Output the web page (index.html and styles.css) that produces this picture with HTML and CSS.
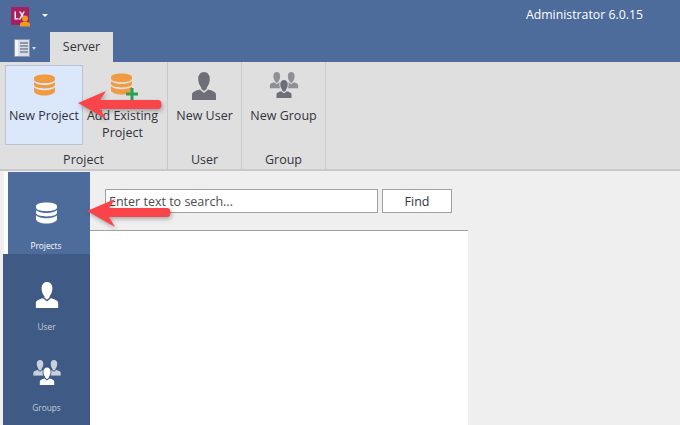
FILE: index.html
```html
<!DOCTYPE html>
<html lang="en">
<head>
<meta charset="utf-8">
<title>Administrator 6.0.15</title>
<link rel="stylesheet" href="styles.css">
</head>
<body>
<svg width="0" height="0" class="defs">
  <defs>
    <symbol id="db" viewBox="0 0 24 24">
      <path d="M0 4.200C0 1.600 5.400 0 12 0s12 1.600 12 4.200v1.600C24 8.400 18.600 10 12 10S0 8.400 0 5.800z"/>
      <path d="M0 8.600C2 11 7 12 12 12s10-1 12-3.400v3.200C24 14.400 18.600 16 12 16S0 14.400 0 11.800z"/>
      <path d="M0 14.600C2 17 7 18 12 18s10-1 12-3.400v4.200C24 21.800 18.600 24 12 24S0 21.800 0 18.800z"/>
    </symbol>
    <symbol id="person" viewBox="0 0 24 28">
      <path d="M12 0c3.400 0 5.800 2.800 5.800 6.800 0 3.400-1.300 7-3 8.600v1.400L12 19l-2.800-2.200v-1.400c-1.700-1.600-3-5.200-3-8.600C6.200 2.800 8.600 0 12 0z"/>
      <path d="M7.800 17.600 12 21l4.200-3.400c3.600 1 7.800 2.400 7.800 5V28H0v-5.400c0-2.600 4.200-4 7.800-5z"/>
    </symbol>
  </defs>
</svg>

<header class="titlebar">
  <div class="quick">
    <svg class="logo" width="20" height="20" viewBox="0 0 20 20">
      <rect x="0" y="0" width="18" height="18" fill="#a81f5f"/>
      <path d="M3.500 4.500v8h4v-1.300H5V4.500zM8 4.500l2.300 3.700-2.500 4.300h1.600l1.700-3 1.500 2 .8-1.500-1.500-1.900 2-3.600h-1.500l-1.300 2.500-1.400-2.500z" fill="#fff"/>
      <circle cx="14" cy="11.500" r="3" fill="#f29a1f"/>
      <path d="M9 19.500V17c0-1.500 2.500-2.500 5-2.500s5 1 5 2.500v2.500z" fill="#f29a1f"/>
    </svg>
    <span class="caret caret-title"></span>
    <span class="title">Administrator 6.0.15</span>
  </div>
  <div class="tabs">
    <div class="menu-button">
      <svg width="16" height="18" viewBox="0 0 16 18">
        <rect x=".5" y=".5" width="15" height="17" fill="#d8dde6" stroke="#8c99ad"/>
        <rect x="1" y="1" width="3" height="16" fill="#f4f4f4"/>
        <path d="M6 4h8M6 7h8M6 10h8M6 13h8" stroke="#4a5568" fill="none"/>
      </svg>
      <span class="caret caret-small"></span>
    </div>
    <div class="tab">Server</div>
  </div>
</header>

<section class="ribbon">
  <div class="group group-project">
    <div class="group-buttons">
      <div class="rbtn rbtn-active">
        <svg class="ico ico-orange"><use href="#db"/></svg>
        <span>New Project</span>
      </div>
      <div class="rbtn rbtn-add">
        <span class="ico-wrap">
          <svg class="ico ico-orange"><use href="#db"/></svg>
          <svg class="plus" width="12" height="12" viewBox="0 0 12 12"><path d="M4.500 0h3v4.500H12v3H7.500V12h-3V7.500H0v-3h4.500z"/></svg>
        </span>
        <span>Add Existing Project</span>
      </div>
    </div>
    <div class="group-label">Project</div>
  </div>
  <div class="group group-user">
    <div class="group-buttons">
      <div class="rbtn">
        <svg class="ico-user"><use href="#person"/></svg>
        <span>New User</span>
      </div>
    </div>
    <div class="group-label">User</div>
  </div>
  <div class="group group-group">
    <div class="group-buttons">
      <div class="rbtn">
        <svg class="ico-group" viewBox="0 0 30 28">
          <use href="#person" x="0" y="0" width="15" height="17" class="back"/>
          <use href="#person" x="15" y="0" width="15" height="17" class="back"/>
          <use href="#person" x="7" y="7" width="16" height="21" class="front"/>
        </svg>
        <span>New Group</span>
      </div>
    </div>
    <div class="group-label">Group</div>
  </div>
</section>

<main class="body">
  <nav class="sidebar">
    <div class="nav-item nav-active">
      <svg class="nav-db"><use href="#db"/></svg>
      <span>Projects</span>
    </div>
    <div class="nav-item">
      <svg class="nav-user"><use href="#person"/></svg>
      <span>User</span>
    </div>
    <div class="nav-item nav-last">
      <svg class="nav-group" viewBox="0 0 30 28">
        <use href="#person" x="0" y="0" width="15" height="17" class="back"/>
        <use href="#person" x="15" y="0" width="15" height="17" class="back"/>
        <use href="#person" x="7" y="7" width="16" height="21" class="front"/>
      </svg>
      <span>Groups</span>
    </div>
  </nav>
  <div class="content">
    <div class="search">
      <div class="search-input">Enter text to search...</div>
      <div class="find">Find</div>
    </div>
    <div class="results"></div>
  </div>
</main>

<svg class="arrow arrow-ribbon" width="86" height="30" viewBox="0 0 86 30">
  <path d="M0 13 28 1l-6 9h58c2.500 0 3.500 2 3.500 4.500S82.500 19 80 19H22l6 10z"/>
</svg>
<svg class="arrow arrow-side" width="86" height="30" viewBox="0 0 86 30">
  <path d="M0 13 28 1l-6 9h58c2.500 0 3.500 2 3.500 4.500S82.500 19 80 19H22l6 10z"/>
</svg>
</body>
</html>
```
FILE: styles.css
```css
* { box-sizing: border-box; }
html, body { margin: 0; padding: 0; }
body {
  position: relative;
  width: 680px;
  height: 425px;
  overflow: hidden;
  background: #efefef;
  font-family: "Open Sans", "Noto Sans", sans-serif;
  font-size: 12.5px;
  color: #33333d;
}
.defs { position: absolute; }

.titlebar { height: 62px; background: #4d6c9c; display: flex; flex-direction: column; }
.quick { height: 32px; display: flex; align-items: flex-start; padding: 7px 0 0 11px; }
.logo { display: block; }
.caret { width: 0; height: 0; border-style: solid; border-color: #fff transparent transparent; }
.caret-title { border-width: 3px 3px 0; margin: 7px 0 0 11px; }
.title { margin: -1px 0 0 auto; padding-right: 37px; color: #fff; font-size: 12.3px; line-height: 18px; }
.tabs { height: 30px; display: flex; }
.menu-button { width: 50px; padding: 7px 0 0 14px; display: flex; align-items: flex-start; }
.caret-small { border-width: 3px 2.5px 0; border-top-color: #d5dbe6; margin: 8px 0 0 2px; }
.tab { width: 63px; background: #dfdfdf; text-align: center; line-height: 30px; font-size: 12.5px; }

.ribbon { height: 109px; display: flex; background: #dfdfdf; border-bottom: 2px solid #c9c9c9; }
.group { display: flex; flex-direction: column; border-right: 1px solid #c9c9c9; }
.group-project { width: 168px; }
.group-user { width: 74px; }
.group-group { width: 84px; }
.group-buttons { height: 88px; flex: none; display: flex; padding: 3px 0 0 5px; }
.group-user .group-buttons, .group-group .group-buttons { padding-left: 0; }
.group-label { text-align: center; font-size: 12.5px; line-height: 17px; padding-top: 1px; }

.rbtn { display: flex; flex-direction: column; align-items: center; text-align: center; line-height: 17px; padding-top: 8px; width: 100%; height: 80px; }
.rbtn > span:last-child { margin-top: 10px; }
.rbtn-active { width: 78px; flex: none; background: #dbe8fb; border: 1px solid #b7c4d6; padding-top: 7px; }
.rbtn-add { width: 79px; flex: none; padding-top: 7px; }
.rbtn-add > span:last-child { margin-top: 11px; }
.ico { display: block; width: 21px; height: 24px; }
.ico-orange { fill: #f09a41; }
.ico-wrap { position: relative; display: block; width: 21px; height: 24px; margin-left: -3px; }
.plus { position: absolute; left: 15px; top: 16px; fill: #2f9e55; }
.ico-user { display: block; width: 24px; height: 28px; fill: #6e6e78; margin: -1px 0 0 -1px; }
.group-user .rbtn > span:last-child { margin-top: 7px; }
.ico-group { display: block; width: 30px; height: 27px; fill: #6e6e78; margin-top: -1px; }
.group-group .rbtn > span:last-child { margin-top: 8px; }
.ico-group .back { opacity: .7; }
.ico-group .front { stroke: #dfdfdf; stroke-width: 3; paint-order: stroke fill; }

.body { height: 254px; display: flex; padding: 1px 0 0 3px; }
.sidebar { width: 87px; display: flex; flex-direction: column; }
.nav-item { height: 81px; flex: none; display: flex; flex-direction: column; align-items: center; background: #3f5a85; font-size: 8.3px; color: #c3cedd; }
.nav-active { height: 82px; margin-left: 1px; background: #4d6c9c; border-left: 4px solid #fff; padding-right: 6px; color: #fff; padding-top: 30px; }
.nav-last { flex: 1; }
.nav-db { display: block; width: 21px; height: 22px; fill: #fff; }
.nav-active span { margin-top: 16px; }
.nav-user { display: block; width: 24px; height: 26px; fill: #fff; margin-top: 28px; }
.nav-item:nth-child(2) span { margin-top: 13px; }
.nav-group { display: block; width: 28px; height: 26px; fill: #fff; margin-top: 25px; }
.nav-item:nth-child(3) span { margin-top: 16px; }
.nav-group .back { opacity: .72; }
.nav-group .front { stroke: #3f5a85; stroke-width: 3; paint-order: stroke fill; }

.content { width: 378px; display: flex; flex-direction: column; }
.search { display: flex; gap: 4px; padding: 17px 0 0 15px; height: 58px; flex: none; }
.search-input { width: 273px; height: 24px; background: #fff; border: 1px solid #a0a0a0; padding-left: 3px; line-height: 24px; color: #4c4c4c; }
.find { width: 70px; height: 24px; background: #fff; border: 1px solid #a0a0a0; text-align: center; line-height: 24px; }
.results { flex: 1; background: #fff; border-top: 1px solid #a0a0a0; }

.arrow { position: absolute; fill: #f9444a; filter: drop-shadow(1px 2px 2px rgba(0,0,0,.3)); }
.arrow-ribbon { left: 78px; top: 90px; }
.arrow-side { left: 87px; top: 198px; }
```
